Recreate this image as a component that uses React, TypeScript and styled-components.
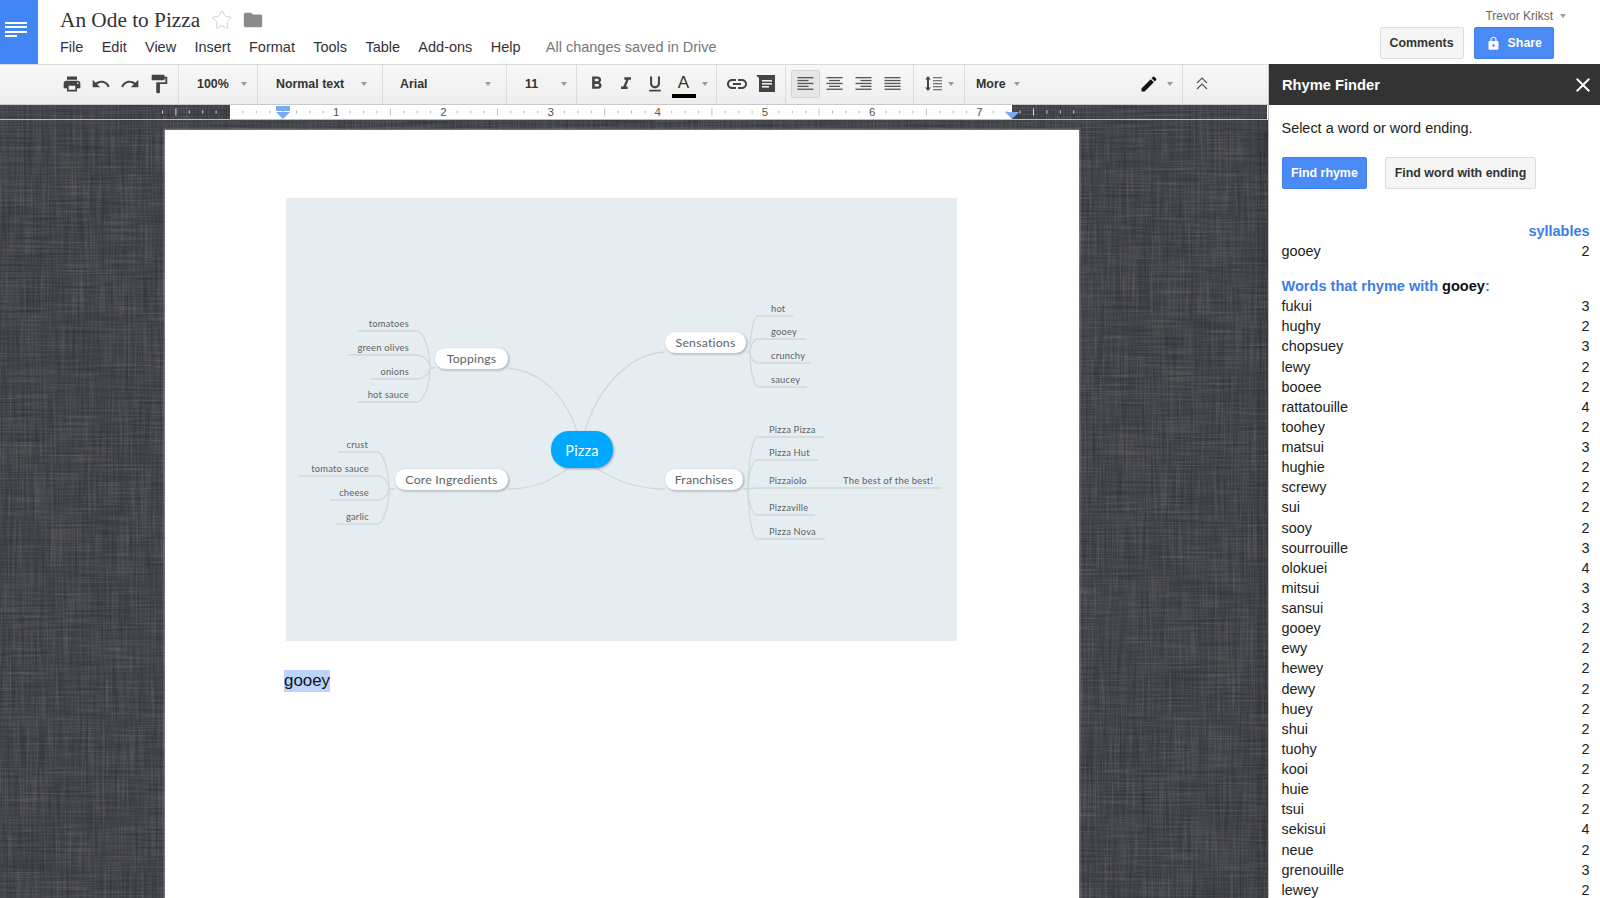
import styled, { createGlobalStyle, css } from 'styled-components'
import { Star } from 'lucide-react'
import {
  MdPrint,
  MdUndo,
  MdRedo,
  MdFormatPaint,
  MdFormatBold,
  MdFormatItalic,
  MdFormatUnderlined,
  MdLink,
  MdEdit,
  MdFolder,
  MdLock,
  MdClose,
} from 'react-icons/md'

const GlobalStyle = createGlobalStyle`
  html, body {
    margin: 0;
    padding: 0;
    background: #fff;
    overflow: hidden;
  }
  body {
    font-family: "Liberation Sans", Arial, sans-serif;
  }
`

// woven threads: stretched noise in both directions, light and dark
const threadFilter = (id: string, freq: string, seed: number, matrix: string) =>
  `<filter id='${id}' x='0' y='0' width='100%' height='100%' color-interpolation-filters='sRGB'>` +
  `<feTurbulence type='fractalNoise' baseFrequency='${freq}' numOctaves='2' seed='${seed}'/>` +
  `<feColorMatrix values='${matrix}'/></filter>`

const LIGHT = '0 0 0 0 0.85 0 0 0 0 0.82 0 0 0 0 0.75 0.28 0 0 0 -0.115'
const DARK = '0 0 0 0 0.08 0 0 0 0 0.08 0 0 0 0 0.12 -0.55 0 0 0 0.31'

const linenSvg =
  `<svg xmlns='http://www.w3.org/2000/svg' width='700' height='800'>` +
  threadFilter('a', '0.6 0.02', 3, LIGHT) +
  threadFilter('b', '0.02 0.6', 8, LIGHT) +
  threadFilter('c', '0.45 0.015', 5, DARK) +
  threadFilter('d', '0.015 0.45', 11, DARK) +
  ['a', 'b', 'c', 'd']
    .map((f) => `<rect width='700' height='800' filter='url(#${f})'/>`)
    .join('') +
  `</svg>`

const linen = css`
  background-color: #404249;
  background-image: url("data:image/svg+xml,${encodeURIComponent(linenSvg)}");
`

const Page = styled.div`
  width: 1600px;
  height: 898px;
  overflow: hidden;
  display: flex;
  flex-direction: column;
  color: #222;
`

// MARK: top bar
const TopBar = styled.div`
  height: 64px;
  flex: none;
  display: flex;
  background: #fff;
`

const DocsIcon = styled.div`
  width: 38px;
  height: 65px;
  flex: none;
  background: #4285f4;
  display: flex;
  flex-direction: column;
  gap: 2.4px;
  padding: 22px 0 0 5px;
  box-sizing: border-box;
`

const DocsLine = styled.span<{ $short?: boolean }>`
  display: block;
  height: 2px;
  width: ${(p) => (p.$short ? '12px' : '22px')};
  background: #fff;
`

const TitleArea = styled.div`
  margin-left: 22px;
  flex: 1;
`

const TitleRow = styled.div`
  height: 38px;
  display: flex;
  align-items: center;
  padding-top: 2px;
  box-sizing: border-box;
`

const DocTitle = styled.div`
  font-family: "Liberation Serif", Georgia, serif;
  font-size: 21.3px;
  color: #333;
`

const StarIcon = styled(Star)`
  margin-left: 11px;
  color: #cfcfcf;
`

const FolderIcon = styled(MdFolder)`
  margin-left: 9px;
  color: #8b8b8b;
`

const MenuRow = styled.div`
  display: flex;
  align-items: center;
  height: 18px;
  font-size: 14.5px;
  color: #333;
`

const MenuItem = styled.span`
  margin-right: 18.3px;
`

const SavedNote = styled.span`
  margin-left: 7px;
  color: #777;
`

const AccountArea = styled.div`
  width: 220px;
  flex: none;
  padding: 9px 34px 0 0;
  box-sizing: border-box;
  display: flex;
  flex-direction: column;
  align-items: flex-end;
`

const UserName = styled.div`
  font-size: 12px;
  height: 14px;
  line-height: 14px;
  color: #666;
  display: flex;
  align-items: center;
`

const Actions = styled.div`
  margin: 4px 12px 0 0;
  display: flex;
  gap: 10px;
`

const ActionButton = styled.div<{ $primary?: boolean }>`
  height: 32px;
  box-sizing: border-box;
  display: flex;
  align-items: center;
  gap: 7px;
  border-radius: 2px;
  font-size: 12.4px;
  font-weight: bold;
  ${(p) =>
    p.$primary
      ? css`
          padding: 0 11px;
          background: #4a8af4;
          border: 1px solid #3f7fe8;
          color: #fff;
        `
      : css`
          padding: 0 9px;
          background: #f5f5f5;
          border: 1px solid #dcdcdc;
          color: #333;
        `}
`

const Caret = styled.span`
  display: inline-block;
  width: 0;
  height: 0;
  flex: none;
  border-left: 3.5px solid transparent;
  border-right: 3.5px solid transparent;
  border-top: 4px solid #9a9a9a;
`

const UserCaret = styled(Caret)`
  margin-left: 7px;
`

// MARK: main area
const Main = styled.div`
  flex: 1;
  display: flex;
  min-height: 0;
`

const Editor = styled.div`
  width: 1268px;
  flex: none;
  display: flex;
  flex-direction: column;
`

const Toolbar = styled.div`
  height: 41px;
  flex: none;
  box-sizing: border-box;
  display: flex;
  background: linear-gradient(#f7f7f7, #eeeeee);
  border-top: 1px solid #dadada;
  border-bottom: 1px solid #c9c9c9;
`

const Group = styled.div<{ $w?: number; $pl?: number; $pr?: number; $open?: boolean }>`
  width: ${(p) => (p.$w ? `${p.$w}px` : 'auto')};
  flex: none;
  box-sizing: border-box;
  display: flex;
  align-items: center;
  padding: 0 ${(p) => p.$pr ?? 0}px 2px ${(p) => p.$pl ?? 0}px;
  border-right: ${(p) => (p.$open ? 'none' : '1px solid #dcdcdc')};
`

const Spacer = styled.div`
  flex: 1;
`

const SelectGroup = styled(Group)`
  justify-content: space-between;
  font-size: 12.4px;
  font-weight: bold;
  color: #333;
`

const ToolBtn = styled.div<{ $active?: boolean }>`
  width: 29px;
  height: 28px;
  flex: none;
  box-sizing: border-box;
  display: flex;
  align-items: center;
  justify-content: center;
  color: #444;
  border-radius: 2px;
  ${(p) =>
    p.$active &&
    css`
      background: #e6e6e6;
      border: 1px solid #d4d4d4;
    `}
`

const ColorA = styled.div`
  width: 24px;
  height: 24px;
  margin: 5px 2.5px 0;
  flex: none;
  font-size: 17px;
  line-height: 17px;
  text-align: center;
  color: #333;
  border-bottom: 4px solid #000;
  box-sizing: border-box;
`

const SmallCaret = styled(Caret)`
  margin-left: 4px;
`

const MoreLabel = styled.span`
  margin-right: 8px;
`

const CollapseCell = styled.div`
  width: 85px;
  flex: none;
  display: flex;
  align-items: center;
  padding: 0 0 2px 13px;
  box-sizing: border-box;
`

const RulerBar = styled.div`
  height: 15px;
  flex: none;
  box-sizing: border-box;
  ${linen}
  border-bottom: 1px solid #bdbdbd;
  margin-right: 1px;
`

const RulerSvg = styled.svg`
  display: block;
`

const RulerNum = styled.text`
  font-family: "Liberation Sans", Arial, sans-serif;
  font-size: 11.5px;
  fill: #555;
`

const Canvas = styled.div`
  flex: 1;
  min-height: 0;
  display: flex;
  ${linen}
`

const Sheet = styled.div`
  width: 914px;
  margin: 10px 0 0 165px;
  padding: 68px 0 0 119px;
  box-sizing: border-box;
  background: #fff;
  box-shadow: 0 0 2px 1px rgba(255, 255, 255, 0.35);
`

const ScrollTrack = styled.div`
  width: 11px;
  margin-left: auto;
  flex: none;
  background: rgba(0, 0, 0, 0.08);
`

const MapFigure = styled.svg`
  display: block;
  margin-left: 2px;
  background: #e6edf1;
`

const Curve = styled.path`
  fill: none;
  stroke: #cfd8dc;
  stroke-width: 1.3;
`

const NodeBox = styled.rect`
  fill: #fff;
  stroke: #e8ecee;
  stroke-width: 0.5;
  filter: drop-shadow(1px 1.5px 1px rgba(70, 85, 95, 0.45));
`

const CenterBox = styled.rect`
  fill: #00a8ff;
  filter: drop-shadow(1px 1.5px 1px rgba(70, 85, 95, 0.45));
`

const MapLabel = styled.text<{ $size: number; $color?: string }>`
  font-family: Lato, "Open Sans", sans-serif;
  font-size: ${(p) => p.$size}px;
  fill: ${(p) => p.$color ?? '#5c6366'};
  letter-spacing: 0.2px;
`

const TypedLine = styled.div`
  margin: 29px 0 0;
  height: 22px;
  line-height: 22px;
  font-size: 16.9px;
  color: #111;
`

const Selected = styled.span`
  display: inline-block;
  background: #bcd4fb;
`

// MARK: rhyme finder sidebar
const Sidebar = styled.div`
  flex: 1;
  background: #fff;
  border-left: 1px solid #c4c4c4;
  min-width: 0;
`

const SideHeader = styled.div`
  height: 41px;
  background: #333;
  display: flex;
  align-items: center;
  justify-content: space-between;
  padding: 0 5px 0 13px;
  color: #fff;
  font-size: 14.7px;
  font-weight: bold;
`

const SideBody = styled.div`
  padding: 0 10.5px 0 12.5px;
  font-size: 14.45px;
  color: #222;
`

const Hint = styled.div`
  height: 20px;
  line-height: 20px;
  margin-top: 13px;
`

const SideButtons = styled.div`
  display: flex;
  gap: 18px;
  margin-top: 19px;
`

const SideButton = styled(ActionButton)`
  padding: 0 8.5px;
  font-size: 12.4px;
`

const SyllableHead = styled.div`
  margin-top: 32px;
  height: 20.14px;
  line-height: 20.14px;
  text-align: right;
  font-weight: bold;
  color: #3b7de6;
`

const Row = styled.div`
  height: 20.14px;
  line-height: 20.14px;
  display: flex;
  justify-content: space-between;
`

const RhymeHead = styled.div`
  margin-top: 15px;
  height: 19.9px;
  line-height: 20.5px;
  font-weight: bold;
  font-size: 14.55px;
  color: #3b7de6;
`

const Word = styled.span`
  color: #111;
`

const rhymes: [string, number][] = [
  ['fukui', 3], ['hughy', 2], ['chopsuey', 3], ['lewy', 2], ['booee', 2],
  ['rattatouille', 4], ['toohey', 2], ['matsui', 3], ['hughie', 2], ['screwy', 2],
  ['sui', 2], ['sooy', 2], ['sourrouille', 3], ['olokuei', 4], ['mitsui', 3],
  ['sansui', 3], ['gooey', 2], ['ewy', 2], ['hewey', 2], ['dewy', 2],
  ['huey', 2], ['shui', 2], ['tuohy', 2], ['kooi', 2], ['huie', 2],
  ['tsui', 2], ['sekisui', 4], ['neue', 2], ['grenouille', 3], ['lewey', 2],
]

const menus = ['File', 'Edit', 'View', 'Insert', 'Format', 'Tools', 'Table', 'Add-ons', 'Help']

// align icons are five thin lines, only the offsets differ
const alignLines: Record<string, [number, number][]> = {
  left: [[0, 16], [0, 11], [0, 16], [0, 11], [0, 16]],
  center: [[0, 16], [2.5, 11], [0, 16], [2.5, 11], [0, 16]],
  right: [[0, 16], [5, 11], [0, 16], [5, 11], [0, 16]],
  justify: [[0, 16], [0, 16], [0, 16], [0, 16], [0, 16]],
}

const AlignIcon = ({ kind }: { kind: string }) => (
  <svg width="17" height="15" viewBox="0 0 16 15">
    {alignLines[kind].map(([x, w], i) => (
      <rect key={i} x={x} y={1 + i * 2.9} width={w} height="1.3" fill="#555" />
    ))}
  </svg>
)

const LineSpacingIcon = () => (
  <svg width="18" height="17" viewBox="0 0 18 17">
    <path d="M3 1 L5.8 4.4 H4 V12.6 H5.8 L3 16 L0.2 12.6 H2 V4.4 H0.2 Z" fill="#444" />
    {[2, 5, 8, 11, 14].map((y) => (
      <rect key={y} x="8" y={y} width="9" height="1.3" fill="#777" />
    ))}
  </svg>
)

const CommentIcon = () => (
  <svg width="20" height="18" viewBox="0 0 20 18">
    <path d="M0 0 H19 V17 H3 V3 Z" fill="#444" />
    <rect x="6" y="5" width="10" height="1.6" fill="#eee" />
    <rect x="6" y="8" width="10" height="1.6" fill="#eee" />
    <rect x="6" y="11" width="7" height="1.6" fill="#eee" />
  </svg>
)

const CollapseIcon = () => (
  <svg width="12" height="13" viewBox="0 0 12 13">
    <path d="M1 6 L6 1 L11 6 M1 12 L6 7 L11 12" fill="none" stroke="#555" strokeWidth="1.2" />
  </svg>
)

// 1/8 inch ticks, ruler zero sits at x=229
const RULER_ZERO = 229
const RULER_STEP = 13.4

const Ruler = () => {
  const ticks = []
  for (let n = -5; n <= 63; n++) {
    const x = RULER_ZERO + n * RULER_STEP
    if (n === 0) continue
    if (n > 0 && n % 8 === 0) {
      ticks.push(
        <RulerNum key={n} x={x} y={11} textAnchor="middle">
          {n / 8}
        </RulerNum>,
      )
      continue
    }
    const dark = x < 230 || x > 1012
    const long = ((n % 8) + 8) % 8 === 4
    const h = long ? 7 : 3
    ticks.push(
      <rect
        key={n}
        x={x}
        y={7 - h / 2}
        width="1"
        height={h}
        fill={dark ? '#d5d5d5' : '#bcbcbc'}
      />,
    )
  }
  return (
    <RulerSvg width="1267" height="14" viewBox="0 0 1267 14">
      <rect x="230" y="0" width="782" height="14" fill="#fff" />
      {ticks}
      <path d="M276 1 H290 V6 H276 Z M276 7 H290 L283 14 Z" fill="#7aa9f5" />
      <path d="M1005 7 H1019 L1012 14 Z" fill="#7aa9f5" />
    </RulerSvg>
  )
}

type Branch = {
  jx: number
  jy: number
  leaves: { label: string; y: number; from: number; to: number; tx: number; end?: boolean }[]
}

const branches: Branch[] = [
  {
    jx: 430,
    jy: 368,
    leaves: [
      { label: 'tomatoes', y: 331, from: 417, to: 358, tx: 409, end: true },
      { label: 'green olives', y: 355, from: 417, to: 348, tx: 409, end: true },
      { label: 'onions', y: 379, from: 417, to: 371, tx: 409, end: true },
      { label: 'hot sauce', y: 402, from: 417, to: 358, tx: 409, end: true },
    ],
  },
  {
    jx: 389,
    jy: 489,
    leaves: [
      { label: 'crust', y: 452, from: 377, to: 338, tx: 368, end: true },
      { label: 'tomato sauce', y: 476, from: 377, to: 299, tx: 369, end: true },
      { label: 'cheese', y: 500, from: 377, to: 330, tx: 369, end: true },
      { label: 'garlic', y: 524, from: 377, to: 336, tx: 369, end: true },
    ],
  },
  {
    jx: 750,
    jy: 352,
    leaves: [
      { label: 'hot', y: 316, from: 758, to: 793, tx: 771 },
      { label: 'gooey', y: 339, from: 758, to: 806, tx: 771 },
      { label: 'crunchy', y: 363, from: 758, to: 811, tx: 771 },
      { label: 'saucey', y: 387, from: 758, to: 807, tx: 771 },
    ],
  },
  {
    jx: 748,
    jy: 489,
    leaves: [
      { label: 'Pizza Pizza', y: 437, from: 757, to: 824, tx: 769 },
      { label: 'Pizza Hut', y: 460, from: 757, to: 818, tx: 769 },
      { label: 'Pizzaiolo', y: 488, from: 757, to: 942, tx: 769 },
      { label: 'Pizzaville', y: 515, from: 757, to: 815, tx: 769 },
      { label: 'Pizza Nova', y: 539, from: 757, to: 825, tx: 769 },
    ],
  },
]

const nodes = [
  { label: 'Toppings', x: 435, y: 348, w: 73, h: 21 },
  { label: 'Core Ingredients', x: 395, y: 469, w: 113, h: 21 },
  { label: 'Sensations', x: 665, y: 332, w: 81, h: 21 },
  { label: 'Franchises', x: 665, y: 469, w: 78, h: 21 },
]

// quarter ellipse from the junction out to the start of the underline
const leafPath = (jx: number, jy: number, y: number, from: number, to: number) => {
  const cy = jy + (y - jy) * 0.55
  const cx = from + (jx - from) * 0.45
  return `M${jx} ${jy} C${jx} ${cy} ${cx} ${y} ${from} ${y} L${to} ${y}`
}

const MindMap = () => (
  <MapFigure width="671" height="443" viewBox="286 198 671 443">
    <Curve d="M508 368 C545 372 567 400 577 431" />
    <Curve d="M585 431 C595 395 625 354 665 352" />
    <Curve d="M508 489 C535 489 552 480 569 468" />
    <Curve d="M596 468 C615 480 635 489 665 489" />
    <Curve d="M435 368 H430 M395 489 H389 M746 352 H750 M743 489 H748" />
    {branches.map((b) =>
      b.leaves.map((l) => (
        <g key={l.label + l.y}>
          <Curve d={leafPath(b.jx, b.jy, l.y, l.from, l.to)} />
          <MapLabel $size={9.4} x={l.tx} y={l.y - 4} textAnchor={l.end ? 'end' : 'start'}>
            {l.label}
          </MapLabel>
        </g>
      )),
    )}
    <MapLabel $size={9.5} x={843} y={484}>
      The best of the best!
    </MapLabel>
    {nodes.map((n) => (
      <g key={n.label}>
        <NodeBox x={n.x} y={n.y} width={n.w} height={n.h} rx="10" />
        <MapLabel $size={12.3} x={n.x + n.w / 2} y={n.y + 15} textAnchor="middle">
          {n.label}
        </MapLabel>
      </g>
    ))}
    <CenterBox x="551" y="431" width="62" height="37" rx="18" />
    <MapLabel $size={14.5} $color="#fff" x="582" y="456" textAnchor="middle">
      Pizza
    </MapLabel>
  </MapFigure>
)

export default function App() {
  return (
    <Page>
      <GlobalStyle />
      <TopBar>
        <DocsIcon>
          <DocsLine />
          <DocsLine />
          <DocsLine />
          <DocsLine $short />
        </DocsIcon>
        <TitleArea>
          <TitleRow>
            <DocTitle>An Ode to Pizza</DocTitle>
            <StarIcon size={22} strokeWidth={1} />
            <FolderIcon size={22} />
          </TitleRow>
          <MenuRow>
            {menus.map((m) => (
              <MenuItem key={m}>{m}</MenuItem>
            ))}
            <SavedNote>All changes saved in Drive</SavedNote>
          </MenuRow>
        </TitleArea>
        <AccountArea>
          <UserName>
            Trevor Krikst
            <UserCaret />
          </UserName>
          <Actions>
            <ActionButton>Comments</ActionButton>
            <ActionButton $primary>
              <MdLock size={15} />
              Share
            </ActionButton>
          </Actions>
        </AccountArea>
      </TopBar>
      <Main>
        <Editor>
          <Toolbar>
            <Group $w={179} $pl={57}>
              <ToolBtn><MdPrint size={20} /></ToolBtn>
              <ToolBtn><MdUndo size={20} /></ToolBtn>
              <ToolBtn><MdRedo size={20} /></ToolBtn>
              <ToolBtn><MdFormatPaint size={22} /></ToolBtn>
            </Group>
            <SelectGroup $w={79} $pl={18} $pr={10}>
              100%<Caret />
            </SelectGroup>
            <SelectGroup $w={125} $pl={18} $pr={15}>
              Normal text<Caret />
            </SelectGroup>
            <SelectGroup $w={124} $pl={17} $pr={15}>
              Arial<Caret />
            </SelectGroup>
            <SelectGroup $w={70} $pl={18} $pr={9}>
              11<Caret />
            </SelectGroup>
            <Group $w={140} $pl={5}>
              <ToolBtn><MdFormatBold size={21} /></ToolBtn>
              <ToolBtn><MdFormatItalic size={20} /></ToolBtn>
              <ToolBtn><MdFormatUnderlined size={20} /></ToolBtn>
              <ColorA>A</ColorA>
              <SmallCaret />
            </Group>
            <Group $w={69} $pl={5}>
              <ToolBtn><MdLink size={24} /></ToolBtn>
              <ToolBtn><CommentIcon /></ToolBtn>
            </Group>
            <Group $w={128} $pl={5}>
              <ToolBtn $active><AlignIcon kind="left" /></ToolBtn>
              <ToolBtn><AlignIcon kind="center" /></ToolBtn>
              <ToolBtn><AlignIcon kind="right" /></ToolBtn>
              <ToolBtn><AlignIcon kind="justify" /></ToolBtn>
            </Group>
            <Group $w={51} $pl={5}>
              <ToolBtn><LineSpacingIcon /></ToolBtn>
              <Caret />
            </Group>
            <SelectGroup $open $pl={11}>
              <MoreLabel>More</MoreLabel>
              <Caret />
            </SelectGroup>
            <Spacer />
            <Group $pr={9}>
              <ToolBtn><MdEdit size={20} color="#111" /></ToolBtn>
              <SmallCaret />
            </Group>
            <CollapseCell>
              <CollapseIcon />
            </CollapseCell>
          </Toolbar>
          <RulerBar>
            <Ruler />
          </RulerBar>
          <Canvas>
            <Sheet>
              <MindMap />
              <TypedLine>
                <Selected>gooey</Selected>
              </TypedLine>
            </Sheet>
            <ScrollTrack />
          </Canvas>
        </Editor>
        <Sidebar>
          <SideHeader>
            Rhyme Finder
            <MdClose size={24} />
          </SideHeader>
          <SideBody>
            <Hint>Select a word or word ending.</Hint>
            <SideButtons>
              <SideButton $primary>Find rhyme</SideButton>
              <SideButton>Find word with ending</SideButton>
            </SideButtons>
            <SyllableHead>syllables</SyllableHead>
            <Row>
              <span>gooey</span>
              <span>2</span>
            </Row>
            <RhymeHead>
              Words that rhyme with <Word>gooey</Word>:
            </RhymeHead>
            {rhymes.map(([w, n]) => (
              <Row key={w + n}>
                <span>{w}</span>
                <span>{n}</span>
              </Row>
            ))}
          </SideBody>
        </Sidebar>
      </Main>
    </Page>
  )
}
